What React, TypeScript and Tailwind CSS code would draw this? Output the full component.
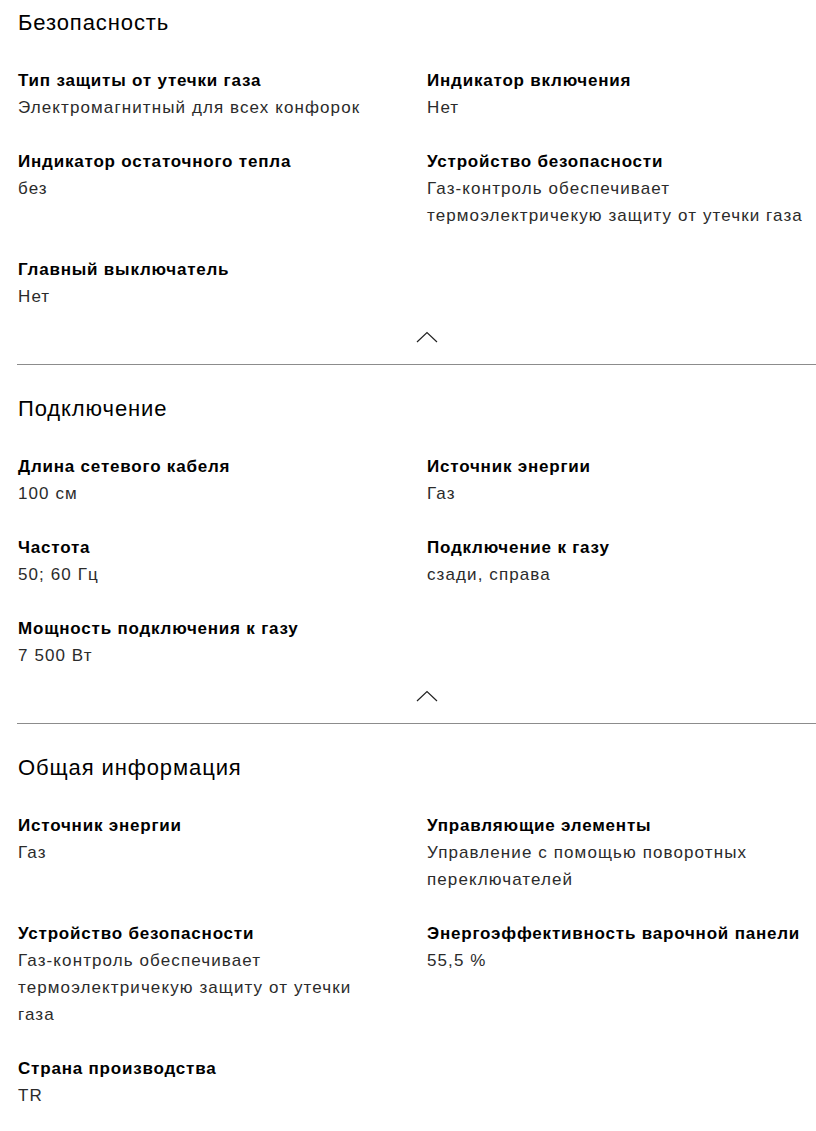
import React from "react";

type Item = { label: string; value: string[] };
type Section = { title: string; items: Item[] };

const sections: Section[] = [
  {
    title: "Безопасность",
    items: [
      { label: "Тип защиты от утечки газа", value: ["Электромагнитный для всех конфорок"] },
      { label: "Индикатор включения", value: ["Нет"] },
      { label: "Индикатор остаточного тепла", value: ["без"] },
      {
        label: "Устройство безопасности",
        value: ["Газ-контроль обеспечивает", "термоэлектричекую защиту от утечки газа"],
      },
      { label: "Главный выключатель", value: ["Нет"] },
    ],
  },
  {
    title: "Подключение",
    items: [
      { label: "Длина сетевого кабеля", value: ["100 см"] },
      { label: "Источник энергии", value: ["Газ"] },
      { label: "Частота", value: ["50; 60 Гц"] },
      { label: "Подключение к газу", value: ["сзади, справа"] },
      { label: "Мощность подключения к газу", value: ["7 500 Вт"] },
    ],
  },
  {
    title: "Общая информация",
    items: [
      { label: "Источник энергии", value: ["Газ"] },
      {
        label: "Управляющие элементы",
        value: ["Управление с помощью поворотных", "переключателей"],
      },
      {
        label: "Устройство безопасности",
        value: ["Газ-контроль обеспечивает", "термоэлектричекую защиту от утечки", "газа"],
      },
      { label: "Энергоэффективность варочной панели", value: ["55,5 %"] },
      { label: "Страна производства", value: ["TR"] },
    ],
  },
];

const ChevronUp = () => (
  <svg width="22" height="12" viewBox="0 0 22 12" fill="none">
    <polyline points="1,11 11,1.5 21,11" stroke="#222" strokeWidth="1.2" />
  </svg>
);

const SpecSection = ({ section, first, last }: { section: Section; first: boolean; last: boolean }) => (
  <section className={last ? "" : "border-b border-[#8c8c8c]"}>
    <h2
      className={`${first ? "pt-[8px]" : "pt-[29px]"} pl-px text-[22px] leading-[30px] tracking-[0.9px] font-normal text-black`}
    >
      {section.title}
    </h2>
    <div className="mt-[29px] grid grid-cols-2 gap-y-[27px] pl-px">
      {section.items.map((item) => (
        <div key={item.label} className="pr-2 whitespace-nowrap">
          <div className="text-[17px] leading-[27px] tracking-[0.8px] font-bold text-black">{item.label}</div>
          {item.value.map((v) => (
            <div key={v} className="text-[17px] leading-[27px] tracking-[1.1px] text-[#2b2b2b]">
              {v}
            </div>
          ))}
        </div>
      ))}
    </div>
    {!last && (
      <div className="mt-[21px] pb-[21px] flex justify-center">
        <ChevronUp />
      </div>
    )}
  </section>
);

const App = () => {
  return (
    <div className="w-[816px] h-[1131px] overflow-hidden bg-white font-['Liberation_Sans',Arial,sans-serif] antialiased">
      <div className="ml-[17px] w-[819px]">
        {sections.map((s, i) => (
          <SpecSection key={s.title} section={s} first={i === 0} last={i === sections.length - 1} />
        ))}
      </div>
    </div>
  );
};

export default App;
